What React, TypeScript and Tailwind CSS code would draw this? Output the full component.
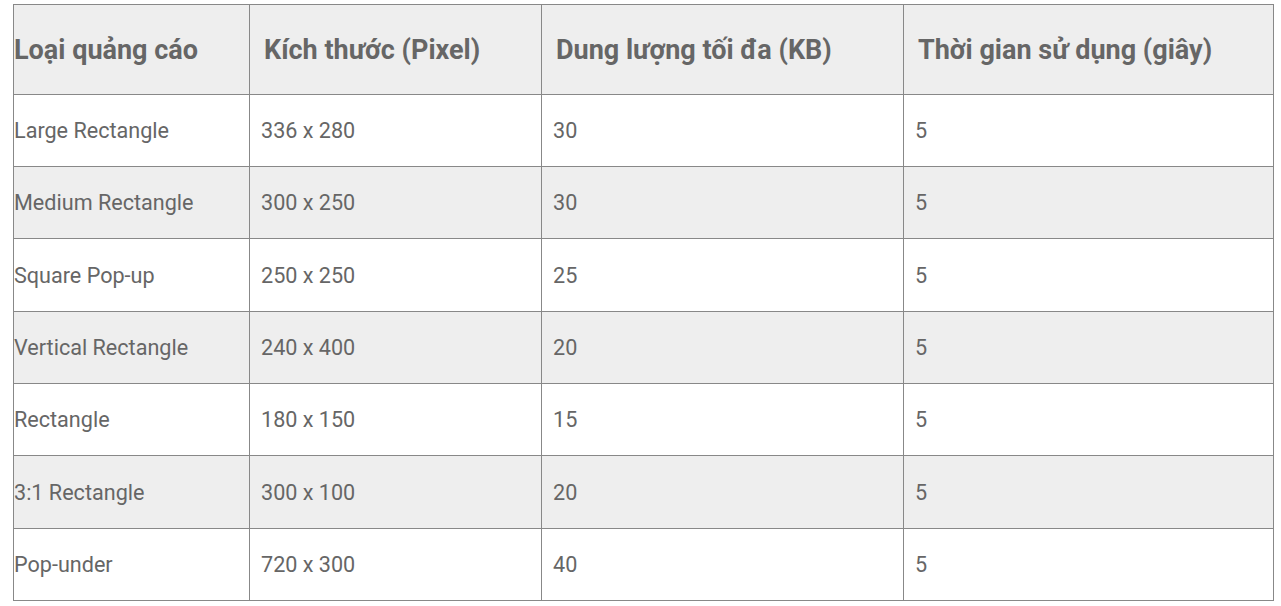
const rows = [
  ["Large Rectangle", "336 x 280", "30", "5"],
  ["Medium Rectangle", "300 x 250", "30", "5"],
  ["Square Pop-up", "250 x 250", "25", "5"],
  ["Vertical Rectangle", "240 x 400", "20", "5"],
  ["Rectangle", "180 x 150", "15", "5"],
  ["3:1 Rectangle", "300 x 100", "20", "5"],
  ["Pop-under", "720 x 300", "40", "5"],
];

const heads = ["Loại quảng cáo", "Kích thước (Pixel)", "Dung lượng tối đa (KB)", "Thời gian sử dụng (giây)"];

export default function App() {
  return (
    <div className="min-h-screen bg-white pl-[13px] pt-[4px] text-[#666] [font-family:Roboto,'Liberation_Sans',sans-serif]">
      <table className="w-[1260px] table-fixed border-collapse border border-[#888]">
        <colgroup>
          <col className="w-[236px]" />
          <col className="w-[292px]" />
          <col className="w-[362px]" />
          <col className="w-[370px]" />
        </colgroup>
        <thead>
          <tr className="h-[90px] bg-[#eeeeee]">
            {heads.map((h, i) => (
              <th
                key={h}
                className={`border border-[#888] pt-[2px] text-left align-middle text-[27px] leading-tight font-bold ${i === 0 ? "pl-0" : "pl-[14px]"}`}
              >
                {h}
              </th>
            ))}
          </tr>
        </thead>
        <tbody>
          {rows.map((r, ri) => (
            <tr key={r[0]} className={`${ri % 3 === 2 ? "h-[73px]" : "h-[72px]"} ${ri % 2 === 1 ? "bg-[#eeeeee]" : "bg-white"}`}>
              {r.map((c, ci) => (
                <td
                  key={ci}
                  className={`border border-[#888] pt-[2px] align-middle text-[21.6px] leading-tight ${ci === 0 ? "pl-0" : "pl-[11px]"}`}
                >
                  {c}
                </td>
              ))}
            </tr>
          ))}
        </tbody>
      </table>
    </div>
  );
}
